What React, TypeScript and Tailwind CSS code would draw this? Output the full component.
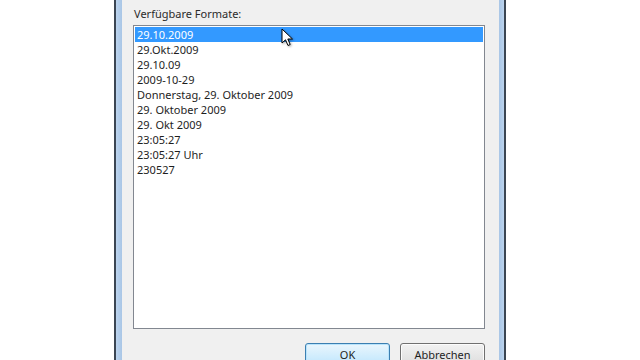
import React from 'react';

const formats = [
  '29.10.2009',
  '29.Okt.2009',
  '29.10.09',
  '2009-10-29',
  'Donnerstag, 29. Oktober 2009',
  '29. Oktober 2009',
  '29. Okt 2009',
  '23:05:27',
  '23:05:27 Uhr',
  '230527',
];

const Cursor = () => (
  <svg width="14" height="20" viewBox="0 0 14 20" className="absolute left-[281px] top-[28px] drop-shadow-[1px_1px_1px_rgba(0,0,0,0.35)]">
    <path d="M1 1 L1 15 L4.5 11.8 L7 17.5 L9.2 16.5 L6.8 11 L11.5 11 Z" fill="#fff" stroke="#000" strokeWidth="1" strokeLinejoin="round" />
  </svg>
);

const App: React.FC = () => {
  return (
    <div className="relative w-[640px] h-[360px] bg-white overflow-hidden" style={{ fontFamily: '"Noto Sans", "Open Sans", sans-serif' }}>
      <div className="ml-[114px] w-[392px] h-[360px] flex border-l-2 border-r-2 border-[#3b4653]">
        <div className="w-[6px] bg-gradient-to-r from-[#bcd4ee] to-[#a9c6e6]" />
        <div className="flex-1 bg-[#f0f0f0] flex flex-col pl-[11px] pr-[14px]">
          <div className="shrink-0 h-[25px] pt-[6px] pl-[1px] text-[11px] leading-[15px] text-[#2a2a2a]">Verfügbare Formate:</div>
          <div className="shrink-0 h-[304px] bg-white border border-[#828790] p-px">
            {formats.map((f, i) => (
              <div
                key={f}
                className={`h-[15px] pl-[2px] text-[11px] leading-[15px] ${i === 0 ? 'bg-[#3399ff] text-white' : 'text-[#1e1e1e]'}`}
              >
                {f}
              </div>
            ))}
          </div>
          <div className="shrink-0 flex justify-end gap-[10px] mt-[14px]">
            <button className="w-[85px] h-[23px] rounded-[3px] border border-[#3c7fb1] bg-gradient-to-b from-[#eaf6fd] to-[#bee6fd] text-[11px] leading-[21px] text-[#1e1e1e] shadow-[inset_0_0_0_1px_#b9e4fc]">
              OK
            </button>
            <button className="w-[85px] h-[23px] rounded-[3px] border border-[#707070] bg-gradient-to-b from-[#f2f2f2] to-[#dddddd] text-[11px] leading-[21px] text-[#1e1e1e] shadow-[inset_0_0_0_1px_#fcfcfc]">
              Abbrechen
            </button>
          </div>
        </div>
        <div className="w-[5px] bg-gradient-to-r from-[#a9c6e6] to-[#bcd4ee]" />
      </div>
      <Cursor />
    </div>
  );
};

export default App;
